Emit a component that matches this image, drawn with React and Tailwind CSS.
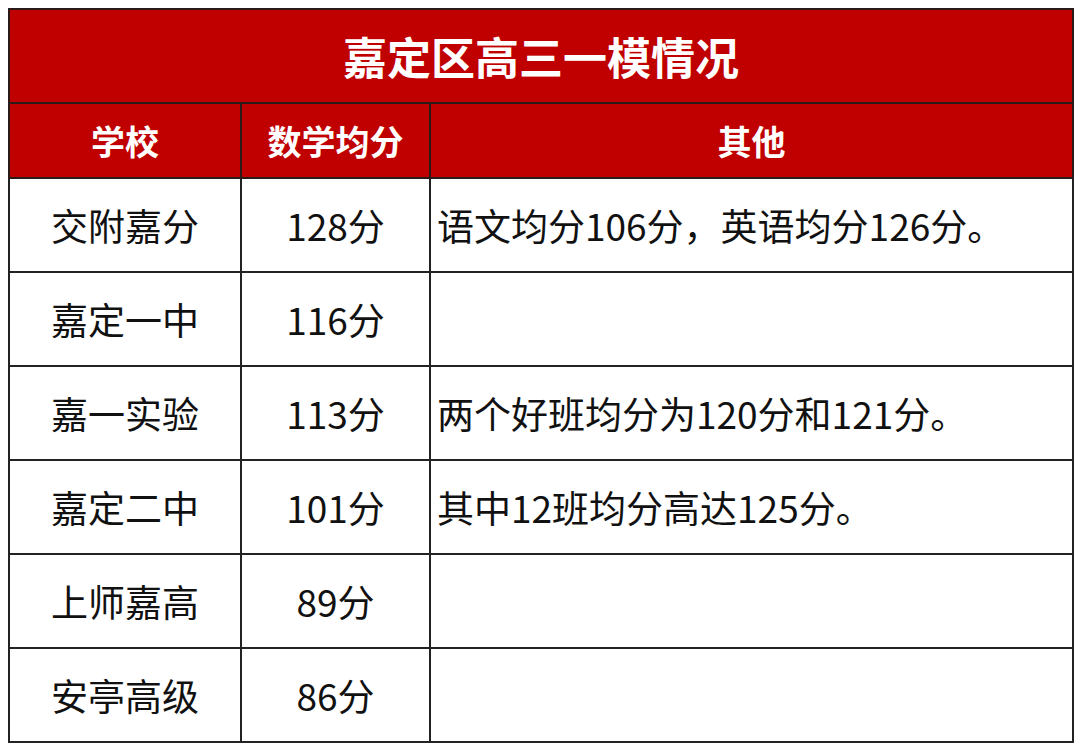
export default function App() {
  const rows = [
    ["交附嘉分", "128分", "语文均分106分，英语均分126分。"],
    ["嘉定一中", "116分", ""],
    ["嘉一实验", "113分", "两个好班均分为120分和121分。"],
    ["嘉定二中", "101分", "其中12班均分高达125分。"],
    ["上师嘉高", "89分", ""],
    ["安亭高级", "86分", ""],
  ];
  const font = { fontFamily: '"Noto Sans CJK SC", "Noto Sans", sans-serif' };
  return (
    <div className="w-[1080px] h-[751px] bg-white pt-[8px] pl-[8px]" style={font}>
      <table className="table-fixed border-collapse w-[1064px]">
        <colgroup>
          <col className="w-[232px]" />
          <col className="w-[189px]" />
          <col className="w-[643px]" />
        </colgroup>
        <tbody>
          <tr className="h-[94px]">
            <td colSpan={3} className="bg-[#c00000] border-2 border-[#2a1a1a] text-center text-white font-bold text-[44px] leading-none p-0">
              嘉定区高三一模情况
            </td>
          </tr>
          <tr className="h-[75px]">
            <td className="bg-[#c00000] border-2 border-[#2a1a1a] text-center text-white font-bold text-[34px] leading-none p-0">学校</td>
            <td className="bg-[#c00000] border-2 border-[#2a1a1a] text-center text-white font-bold text-[34px] leading-none p-0">数学均分</td>
            <td className="bg-[#c00000] border-2 border-[#2a1a1a] text-center text-white font-bold text-[34px] leading-none p-0">其他</td>
          </tr>
          {rows.map((r, i) => (
            <tr key={i} className="h-[94px]">
              <td className="border-2 border-[#222] text-center text-[#111] text-[37px] leading-none p-0">{r[0]}</td>
              <td className="border-2 border-[#222] text-center text-[#111] text-[37px] leading-none p-0">{r[1]}</td>
              <td className="border-2 border-[#222] text-left text-[#111] text-[37px] leading-none py-0 pl-[6px] pr-0 whitespace-nowrap">{r[2]}</td>
            </tr>
          ))}
        </tbody>
      </table>
    </div>
  );
}
